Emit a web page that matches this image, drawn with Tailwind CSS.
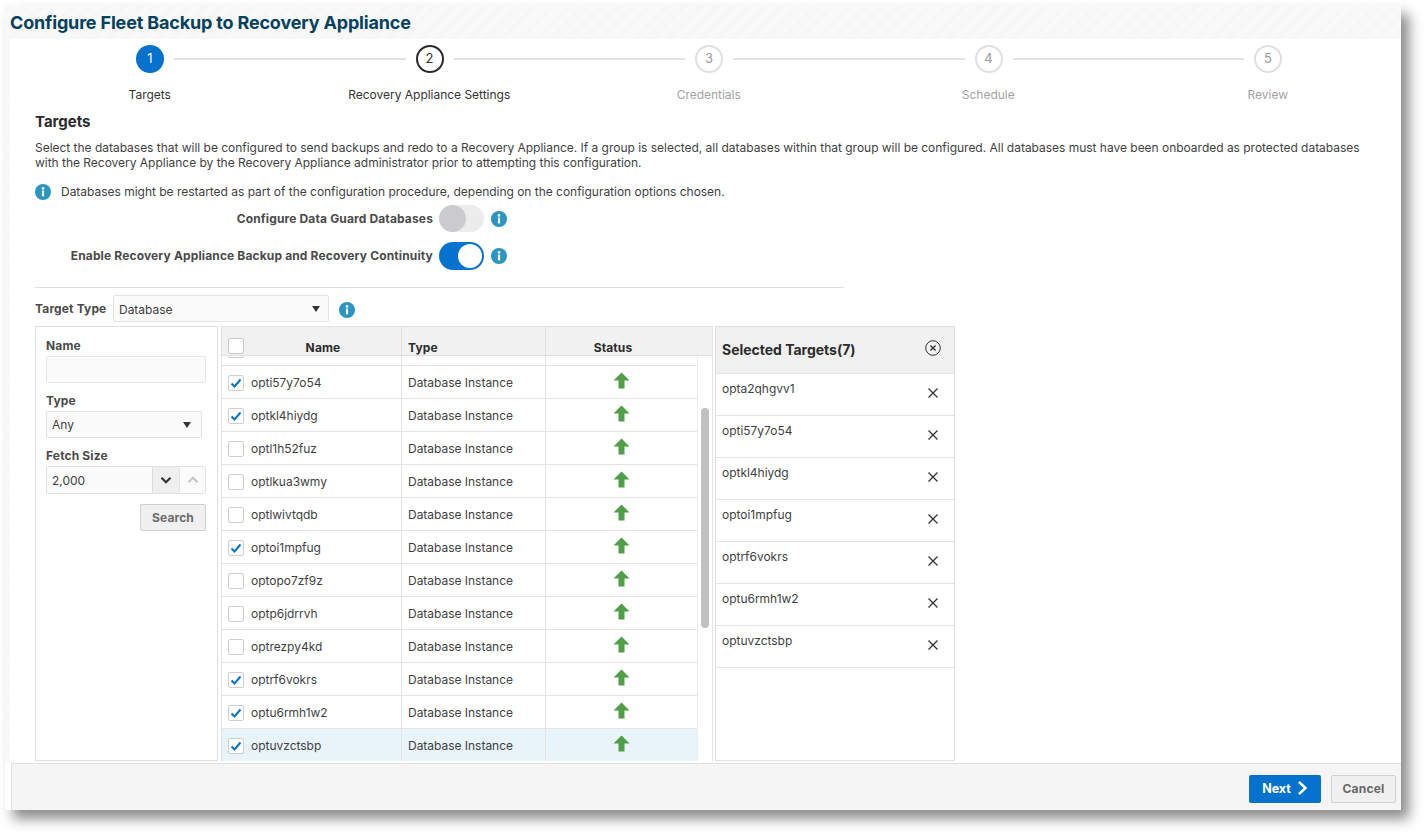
<!DOCTYPE html>
<html lang="en">
<head>
<meta charset="UTF-8">
<title>Configure Fleet Backup to Recovery Appliance</title>
<script src="https://cdn.jsdelivr.net/npm/@tailwindcss/browser@4"></script>
</head>
<body class="bg-white font-['Inter','Liberation_Sans',sans-serif] text-[12px] text-[#3f3f3f] tracking-[-0.02px]">
<div class="w-[1426px] h-[835px] pl-[5px] pt-[5px] overflow-hidden">
  <div class="w-[1396px] h-[805px] flex flex-col relative bg-white shadow-[8px_9px_12px_rgba(0,0,0,0.45)]">
    <!-- title bar -->
    <div class="h-[34px] shrink-0 pl-[5px] flex items-center bg-[repeating-linear-gradient(135deg,#f5f5f5_0,#f5f5f5_1px,#fbfbfb_1px,#fbfbfb_2px)]">
      <h1 class="text-[18px] font-bold text-[#04415f] tracking-[-0.17px]">Configure Fleet Backup to Recovery Appliance</h1>
    </div>

    <div class="flex-1 flex min-h-0">
      <div class="w-[5px] shrink-0 bg-[repeating-linear-gradient(135deg,#f5f5f5_0,#f5f5f5_1px,#fbfbfb_1px,#fbfbfb_2px)]"></div>
      <div class="flex-1 min-w-0 flex flex-col">
        <!-- stepper -->
        <div class="pt-[6px] flex items-center pl-[126px] pr-[119px]">
          <div class="w-[28px] h-[28px] rounded-full bg-[#0572ce] text-white flex items-center justify-center text-[13px] shrink-0">1</div>
          <div class="flex-1 h-[2px] bg-[#e3e3e3] mx-[10px]"></div>
          <div class="w-[28px] h-[28px] rounded-full border-2 border-[#2b2b2b] text-[#333] flex items-center justify-center text-[13px] shrink-0">2</div>
          <div class="flex-1 h-[2px] bg-[#e3e3e3] mx-[10px]"></div>
          <div class="w-[28px] h-[28px] rounded-full border-2 border-[#e0e0e0] text-[#9a9a9a] flex items-center justify-center text-[13px] shrink-0">3</div>
          <div class="flex-1 h-[2px] bg-[#e3e3e3] mx-[10px]"></div>
          <div class="w-[28px] h-[28px] rounded-full border-2 border-[#e0e0e0] text-[#9a9a9a] flex items-center justify-center text-[13px] shrink-0">4</div>
          <div class="flex-1 h-[2px] bg-[#e3e3e3] mx-[10px]"></div>
          <div class="w-[28px] h-[28px] rounded-full border-2 border-[#e0e0e0] text-[#9a9a9a] flex items-center justify-center text-[13px] shrink-0">5</div>
        </div>
        <div class="grid grid-cols-[repeat(5,279.5px)] mt-[14px] h-[15px] leading-[15px] text-center">
          <div class="text-[#333]">Targets</div>
          <div class="text-[#333]">Recovery Appliance Settings</div>
          <div class="text-[#a3a3a3]">Credentials</div>
          <div class="text-[#a3a3a3]">Schedule</div>
          <div class="text-[#a3a3a3]">Review</div>
        </div>

        <!-- content -->
        <div class="pl-[25px] pt-[11px] flex-1 min-h-0 flex flex-col">
          <h2 class="text-[15px] font-bold text-[#2b2b2b] leading-[18px]">Targets</h2>
          <p class="mt-[9px] leading-[15px] w-[1340px] text-[#3f3f3f]">Select the databases that will be configured to send backups and redo to a Recovery Appliance. If a group is selected, all databases within that group will be configured. All databases must have been onboarded as protected databases with the Recovery Appliance by the Recovery Appliance administrator prior to attempting this configuration.</p>
          <div class="mt-[14px] flex items-center h-[16px]">
            <svg class="w-[16px] h-[16px] shrink-0" viewBox="0 0 16 16"><circle cx="8" cy="8" r="8" fill="#2b94c3"/><rect x="6.9" y="6.6" width="2.2" height="5.8" fill="#fff"/><circle cx="8" cy="4.4" r="1.3" fill="#fff"/></svg>
            <span class="ml-[10px]">Databases might be restarted as part of the configuration procedure, depending on the configuration options chosen.</span>
          </div>

          <div class="mt-[5px] h-[27px] flex items-center">
            <label class="w-[398px] text-right font-bold tracking-[0.14px] text-[#4a4a4a]">Configure Data Guard Databases</label>
            <div class="ml-[6px] w-[45px] h-[27px] rounded-full bg-[#ececec] relative">
              <div class="absolute left-0 top-0 w-[27px] h-[27px] rounded-full bg-[#cbcbcd]"></div>
            </div>
            <svg class="ml-[7px] w-[16px] h-[16px]" viewBox="0 0 16 16"><circle cx="8" cy="8" r="8" fill="#2b94c3"/><rect x="6.9" y="6.6" width="2.2" height="5.8" fill="#fff"/><circle cx="8" cy="4.4" r="1.3" fill="#fff"/></svg>
          </div>
          <div class="mt-[10px] h-[28px] flex items-center">
            <label class="w-[398px] text-right font-bold tracking-[0.14px] text-[#4a4a4a]">Enable Recovery Appliance Backup and Recovery Continuity</label>
            <div class="ml-[6px] w-[45px] h-[28px] rounded-full bg-[#0572ce] relative">
              <div class="absolute right-[2px] top-[2px] w-[24px] h-[24px] rounded-full bg-white"></div>
            </div>
            <svg class="ml-[7px] w-[16px] h-[16px]" viewBox="0 0 16 16"><circle cx="8" cy="8" r="8" fill="#2b94c3"/><rect x="6.9" y="6.6" width="2.2" height="5.8" fill="#fff"/><circle cx="8" cy="4.4" r="1.3" fill="#fff"/></svg>
          </div>
          <div class="mt-[17px] w-[809px] h-px bg-[#dfdfdf]"></div>

          <div class="mt-[7px] h-[27px] flex items-center">
            <label class="w-[78px] font-bold tracking-[0.14px] text-[#4a4a4a]">Target Type</label>
            <div class="w-[216px] h-[27px] border border-[#e3e3e3] rounded-[2px] bg-[#fbfbfb] flex items-center justify-between pl-[5px] pr-[7px]">
              <span class="pt-[2px]">Database</span>
              <span class="w-0 h-0 border-l-[4.5px] border-r-[4.5px] border-t-[6px] border-l-transparent border-r-transparent border-t-[#333] mr-[1px]"></span>
            </div>
            <svg class="ml-[10px] mt-[3px] w-[16px] h-[16px]" viewBox="0 0 16 16"><circle cx="8" cy="8" r="8" fill="#2b94c3"/><rect x="6.9" y="6.6" width="2.2" height="5.8" fill="#fff"/><circle cx="8" cy="4.4" r="1.3" fill="#fff"/></svg>
          </div>

          <div class="mt-[4px] flex items-start">
            <!-- search panel -->
            <div class="w-[183px] h-[435px] border border-[#dfdfdf] pl-[10px] pr-[11px] pt-[11px] shrink-0">
              <div class="font-bold tracking-[0.14px] text-[#4a4a4a] leading-[15px]">Name</div>
              <div class="mt-[3px] h-[27px] border border-[#e8e8e8] rounded-[2px] bg-[#fbfbfb]"></div>
              <div class="mt-[10px] font-bold tracking-[0.14px] text-[#4a4a4a] leading-[15px]">Type</div>
              <div class="mt-[3px] w-[156px] h-[27px] border border-[#e3e3e3] rounded-[2px] bg-[#fbfbfb] flex items-center justify-between pl-[5px] pr-[10px]">
                <span class="pt-[1px]">Any</span>
                <span class="w-0 h-0 border-l-[4.5px] border-r-[4.5px] border-t-[6px] border-l-transparent border-r-transparent border-t-[#333]"></span>
              </div>
              <div class="mt-[10px] font-bold tracking-[0.14px] text-[#4a4a4a] leading-[15px]">Fetch Size</div>
              <div class="mt-[3px] h-[28px] border border-[#e3e3e3] rounded-[2px] bg-[#fbfbfb] flex">
                <div class="flex-1 pl-[5px] pt-[1px] flex items-center">2,000</div>
                <div class="w-[27px] border-l border-[#dcdcdc] bg-[#efefef] flex items-center justify-center">
                  <svg class="w-[12px] h-[12px]" viewBox="0 0 12 12" fill="none" stroke="#333" stroke-width="2.2"><path d="M1.5 3.8 6 8.2l4.5-4.4"/></svg>
                </div>
                <div class="w-[26px] border-l border-[#e3e3e3] flex items-center justify-center">
                  <svg class="w-[12px] h-[12px]" viewBox="0 0 12 12" fill="none" stroke="#c6c6c6" stroke-width="2.2"><path d="M1.5 8.2 6 3.8l4.5 4.4"/></svg>
                </div>
              </div>
              <div class="mt-[10px] flex justify-end">
                <button class="w-[66px] h-[27px] border border-[#d0d0d0] rounded-[2px] bg-[#f0f0f0] font-bold tracking-[0.1px] text-[#6a6a6a]">Search</button>
              </div>
            </div>

            <!-- table -->
            <div class="ml-[3px] w-[492px] h-[435px] border-l border-t border-r border-[#e3e3e3] shrink-0 flex flex-col">
              <div class="h-[29px] shrink-0 bg-[#f1f1f1] border-b border-[#e0e0e0] flex font-bold tracking-[0.14px] text-[#2b2b2b] leading-[15px]">
                <div class="w-[180px] border-r border-[#e0e0e0] relative flex items-end justify-center pl-[23px]">
                  <span class="absolute left-[6px] top-[11px] w-[16px] h-[16px] border border-[#c8c8c8] rounded-[2px] bg-white"></span>Name</div>
                <div class="w-[144px] border-r border-[#e0e0e0] flex items-end pl-[6px]">Type</div>
                <div class="flex-1 flex items-end justify-center pr-[32px]">Status</div>
              </div>
              <div class="flex-1 min-h-0 flex overflow-hidden">
                <div class="flex-1 min-w-0 overflow-hidden border-r border-[#ededed]" id="rows">
                  <div class="-mt-[23px]">
                    <div class="h-[33px] border-b border-[#e3e3e3] flex items-center">
                      <div class="w-[180px] h-full border-r border-[#e3e3e3] flex items-center pl-[6px] pt-[1px]"><span class="w-[16px] h-[16px] border border-[#cfcfcf] rounded-[2px] bg-white shrink-0"></span></div>
                      <div class="w-[144px] h-full border-r border-[#e3e3e3]"></div>
                    </div>
                    <div class="h-[33px] border-b border-[#e3e3e3] flex">
                      <div class="w-[180px] border-r border-[#e3e3e3] flex items-center pl-[6px] pt-[1px]"><span class="w-[16px] h-[16px] border border-[#cfcfcf] rounded-[2px] bg-white shrink-0 flex items-center justify-center"><svg class="w-[12px] h-[12px]" viewBox="0 0 12 12" fill="none" stroke="#0572ce" stroke-width="2"><path d="M1.5 6.5 4.5 9.5 10.5 2.5"/></svg></span><span class="ml-[7px]">opti57y7o54</span></div>
                      <div class="w-[144px] border-r border-[#e3e3e3] flex items-center pl-[6px] pt-[1px]">Database Instance</div>
                      <div class="flex-1 flex items-center justify-center pr-[1px] pb-[3px]"><svg class="w-[17px] h-[17px]" viewBox="0 0 17 17"><path d="M8.5 0.5 16.5 8.5H11.5V16.5H5.5V8.5H0.5Z" fill="#519e49"/></svg></div>
                    </div>
                    <div class="h-[33px] border-b border-[#e3e3e3] flex">
                      <div class="w-[180px] border-r border-[#e3e3e3] flex items-center pl-[6px] pt-[1px]"><span class="w-[16px] h-[16px] border border-[#cfcfcf] rounded-[2px] bg-white shrink-0 flex items-center justify-center"><svg class="w-[12px] h-[12px]" viewBox="0 0 12 12" fill="none" stroke="#0572ce" stroke-width="2"><path d="M1.5 6.5 4.5 9.5 10.5 2.5"/></svg></span><span class="ml-[7px]">optkl4hiydg</span></div>
                      <div class="w-[144px] border-r border-[#e3e3e3] flex items-center pl-[6px] pt-[1px]">Database Instance</div>
                      <div class="flex-1 flex items-center justify-center pr-[1px] pb-[3px]"><svg class="w-[17px] h-[17px]" viewBox="0 0 17 17"><path d="M8.5 0.5 16.5 8.5H11.5V16.5H5.5V8.5H0.5Z" fill="#519e49"/></svg></div>
                    </div>
                    <div class="h-[33px] border-b border-[#e3e3e3] flex">
                      <div class="w-[180px] border-r border-[#e3e3e3] flex items-center pl-[6px] pt-[1px]"><span class="w-[16px] h-[16px] border border-[#cfcfcf] rounded-[2px] bg-white shrink-0"></span><span class="ml-[7px]">optl1h52fuz</span></div>
                      <div class="w-[144px] border-r border-[#e3e3e3] flex items-center pl-[6px] pt-[1px]">Database Instance</div>
                      <div class="flex-1 flex items-center justify-center pr-[1px] pb-[3px]"><svg class="w-[17px] h-[17px]" viewBox="0 0 17 17"><path d="M8.5 0.5 16.5 8.5H11.5V16.5H5.5V8.5H0.5Z" fill="#519e49"/></svg></div>
                    </div>
                    <div class="h-[33px] border-b border-[#e3e3e3] flex">
                      <div class="w-[180px] border-r border-[#e3e3e3] flex items-center pl-[6px] pt-[1px]"><span class="w-[16px] h-[16px] border border-[#cfcfcf] rounded-[2px] bg-white shrink-0"></span><span class="ml-[7px]">optlkua3wmy</span></div>
                      <div class="w-[144px] border-r border-[#e3e3e3] flex items-center pl-[6px] pt-[1px]">Database Instance</div>
                      <div class="flex-1 flex items-center justify-center pr-[1px] pb-[3px]"><svg class="w-[17px] h-[17px]" viewBox="0 0 17 17"><path d="M8.5 0.5 16.5 8.5H11.5V16.5H5.5V8.5H0.5Z" fill="#519e49"/></svg></div>
                    </div>
                    <div class="h-[33px] border-b border-[#e3e3e3] flex">
                      <div class="w-[180px] border-r border-[#e3e3e3] flex items-center pl-[6px] pt-[1px]"><span class="w-[16px] h-[16px] border border-[#cfcfcf] rounded-[2px] bg-white shrink-0"></span><span class="ml-[7px]">optlwivtqdb</span></div>
                      <div class="w-[144px] border-r border-[#e3e3e3] flex items-center pl-[6px] pt-[1px]">Database Instance</div>
                      <div class="flex-1 flex items-center justify-center pr-[1px] pb-[3px]"><svg class="w-[17px] h-[17px]" viewBox="0 0 17 17"><path d="M8.5 0.5 16.5 8.5H11.5V16.5H5.5V8.5H0.5Z" fill="#519e49"/></svg></div>
                    </div>
                    <div class="h-[33px] border-b border-[#e3e3e3] flex">
                      <div class="w-[180px] border-r border-[#e3e3e3] flex items-center pl-[6px] pt-[1px]"><span class="w-[16px] h-[16px] border border-[#cfcfcf] rounded-[2px] bg-white shrink-0 flex items-center justify-center"><svg class="w-[12px] h-[12px]" viewBox="0 0 12 12" fill="none" stroke="#0572ce" stroke-width="2"><path d="M1.5 6.5 4.5 9.5 10.5 2.5"/></svg></span><span class="ml-[7px]">optoi1mpfug</span></div>
                      <div class="w-[144px] border-r border-[#e3e3e3] flex items-center pl-[6px] pt-[1px]">Database Instance</div>
                      <div class="flex-1 flex items-center justify-center pr-[1px] pb-[3px]"><svg class="w-[17px] h-[17px]" viewBox="0 0 17 17"><path d="M8.5 0.5 16.5 8.5H11.5V16.5H5.5V8.5H0.5Z" fill="#519e49"/></svg></div>
                    </div>
                    <div class="h-[33px] border-b border-[#e3e3e3] flex">
                      <div class="w-[180px] border-r border-[#e3e3e3] flex items-center pl-[6px] pt-[1px]"><span class="w-[16px] h-[16px] border border-[#cfcfcf] rounded-[2px] bg-white shrink-0"></span><span class="ml-[7px]">optopo7zf9z</span></div>
                      <div class="w-[144px] border-r border-[#e3e3e3] flex items-center pl-[6px] pt-[1px]">Database Instance</div>
                      <div class="flex-1 flex items-center justify-center pr-[1px] pb-[3px]"><svg class="w-[17px] h-[17px]" viewBox="0 0 17 17"><path d="M8.5 0.5 16.5 8.5H11.5V16.5H5.5V8.5H0.5Z" fill="#519e49"/></svg></div>
                    </div>
                    <div class="h-[33px] border-b border-[#e3e3e3] flex">
                      <div class="w-[180px] border-r border-[#e3e3e3] flex items-center pl-[6px] pt-[1px]"><span class="w-[16px] h-[16px] border border-[#cfcfcf] rounded-[2px] bg-white shrink-0"></span><span class="ml-[7px]">optp6jdrrvh</span></div>
                      <div class="w-[144px] border-r border-[#e3e3e3] flex items-center pl-[6px] pt-[1px]">Database Instance</div>
                      <div class="flex-1 flex items-center justify-center pr-[1px] pb-[3px]"><svg class="w-[17px] h-[17px]" viewBox="0 0 17 17"><path d="M8.5 0.5 16.5 8.5H11.5V16.5H5.5V8.5H0.5Z" fill="#519e49"/></svg></div>
                    </div>
                    <div class="h-[33px] border-b border-[#e3e3e3] flex">
                      <div class="w-[180px] border-r border-[#e3e3e3] flex items-center pl-[6px] pt-[1px]"><span class="w-[16px] h-[16px] border border-[#cfcfcf] rounded-[2px] bg-white shrink-0"></span><span class="ml-[7px]">optrezpy4kd</span></div>
                      <div class="w-[144px] border-r border-[#e3e3e3] flex items-center pl-[6px] pt-[1px]">Database Instance</div>
                      <div class="flex-1 flex items-center justify-center pr-[1px] pb-[3px]"><svg class="w-[17px] h-[17px]" viewBox="0 0 17 17"><path d="M8.5 0.5 16.5 8.5H11.5V16.5H5.5V8.5H0.5Z" fill="#519e49"/></svg></div>
                    </div>
                    <div class="h-[33px] border-b border-[#e3e3e3] flex">
                      <div class="w-[180px] border-r border-[#e3e3e3] flex items-center pl-[6px] pt-[1px]"><span class="w-[16px] h-[16px] border border-[#cfcfcf] rounded-[2px] bg-white shrink-0 flex items-center justify-center"><svg class="w-[12px] h-[12px]" viewBox="0 0 12 12" fill="none" stroke="#0572ce" stroke-width="2"><path d="M1.5 6.5 4.5 9.5 10.5 2.5"/></svg></span><span class="ml-[7px]">optrf6vokrs</span></div>
                      <div class="w-[144px] border-r border-[#e3e3e3] flex items-center pl-[6px] pt-[1px]">Database Instance</div>
                      <div class="flex-1 flex items-center justify-center pr-[1px] pb-[3px]"><svg class="w-[17px] h-[17px]" viewBox="0 0 17 17"><path d="M8.5 0.5 16.5 8.5H11.5V16.5H5.5V8.5H0.5Z" fill="#519e49"/></svg></div>
                    </div>
                    <div class="h-[33px] border-b border-[#e3e3e3] flex">
                      <div class="w-[180px] border-r border-[#e3e3e3] flex items-center pl-[6px] pt-[1px]"><span class="w-[16px] h-[16px] border border-[#cfcfcf] rounded-[2px] bg-white shrink-0 flex items-center justify-center"><svg class="w-[12px] h-[12px]" viewBox="0 0 12 12" fill="none" stroke="#0572ce" stroke-width="2"><path d="M1.5 6.5 4.5 9.5 10.5 2.5"/></svg></span><span class="ml-[7px]">optu6rmh1w2</span></div>
                      <div class="w-[144px] border-r border-[#e3e3e3] flex items-center pl-[6px] pt-[1px]">Database Instance</div>
                      <div class="flex-1 flex items-center justify-center pr-[1px] pb-[3px]"><svg class="w-[17px] h-[17px]" viewBox="0 0 17 17"><path d="M8.5 0.5 16.5 8.5H11.5V16.5H5.5V8.5H0.5Z" fill="#519e49"/></svg></div>
                    </div>
                    <div class="h-[33px] bg-[#e8f3fa] flex">
                      <div class="w-[180px] border-r border-[#e3e3e3] flex items-center pl-[6px]"><span class="w-[16px] h-[16px] border border-[#cfcfcf] rounded-[2px] bg-white shrink-0 flex items-center justify-center"><svg class="w-[12px] h-[12px]" viewBox="0 0 12 12" fill="none" stroke="#0572ce" stroke-width="2"><path d="M1.5 6.5 4.5 9.5 10.5 2.5"/></svg></span><span class="ml-[7px]">optuvzctsbp</span></div>
                      <div class="w-[144px] border-r border-[#e3e3e3] flex items-center pl-[6px]">Database Instance</div>
                      <div class="flex-1 flex items-center justify-center pr-[1px] pb-[4px]"><svg class="w-[17px] h-[17px]" viewBox="0 0 17 17"><path d="M8.5 0.5 16.5 8.5H11.5V16.5H5.5V8.5H0.5Z" fill="#519e49"/></svg></div>
                    </div>
                  </div>
                </div>
                <!-- scrollbar -->
                <div class="w-[14px] shrink-0 pl-[3px] pt-[52px]">
                  <div class="w-[8px] h-[220px] rounded-full bg-[#c1c1c1]"></div>
                </div>
              </div>
            </div>

            <!-- selected targets -->
            <div class="ml-[2px] w-[240px] h-[435px] border border-[#e0e0e0] shrink-0">
              <div class="h-[47px] bg-[#f1f1f1] border-b border-[#e3e3e3] flex items-center justify-between pl-[6px] pr-[13px]">
                <span class="text-[14px] font-bold text-[#2b2b2b] -mt-[2px]">Selected Targets(7)</span>
                <svg class="w-[16px] h-[16px] -mt-[4px]" viewBox="0 0 16 16" fill="none" stroke="#333" stroke-width="1"><circle cx="8" cy="8" r="7.3"/><path d="M5.4 5.4l5.2 5.2M10.6 5.4l-5.2 5.2" stroke-width="1.4"/></svg>
              </div>
              <div class="h-[42px] border-b border-[#e3e3e3] flex justify-between pl-[6px] pr-[16px] pt-[7px]"><span class="leading-[15px]">opta2qhgvv1</span><svg class="w-[10px] h-[10px] mt-[7px]" viewBox="0 0 10 10" stroke="#333" stroke-width="1.3"><path d="M0.5 0.5l9 9M9.5 0.5l-9 9"/></svg></div>
              <div class="h-[42px] border-b border-[#e3e3e3] flex justify-between pl-[6px] pr-[16px] pt-[7px]"><span class="leading-[15px]">opti57y7o54</span><svg class="w-[10px] h-[10px] mt-[7px]" viewBox="0 0 10 10" stroke="#333" stroke-width="1.3"><path d="M0.5 0.5l9 9M9.5 0.5l-9 9"/></svg></div>
              <div class="h-[42px] border-b border-[#e3e3e3] flex justify-between pl-[6px] pr-[16px] pt-[7px]"><span class="leading-[15px]">optkl4hiydg</span><svg class="w-[10px] h-[10px] mt-[7px]" viewBox="0 0 10 10" stroke="#333" stroke-width="1.3"><path d="M0.5 0.5l9 9M9.5 0.5l-9 9"/></svg></div>
              <div class="h-[42px] border-b border-[#e3e3e3] flex justify-between pl-[6px] pr-[16px] pt-[7px]"><span class="leading-[15px]">optoi1mpfug</span><svg class="w-[10px] h-[10px] mt-[7px]" viewBox="0 0 10 10" stroke="#333" stroke-width="1.3"><path d="M0.5 0.5l9 9M9.5 0.5l-9 9"/></svg></div>
              <div class="h-[42px] border-b border-[#e3e3e3] flex justify-between pl-[6px] pr-[16px] pt-[7px]"><span class="leading-[15px]">optrf6vokrs</span><svg class="w-[10px] h-[10px] mt-[7px]" viewBox="0 0 10 10" stroke="#333" stroke-width="1.3"><path d="M0.5 0.5l9 9M9.5 0.5l-9 9"/></svg></div>
              <div class="h-[42px] border-b border-[#e3e3e3] flex justify-between pl-[6px] pr-[16px] pt-[7px]"><span class="leading-[15px]">optu6rmh1w2</span><svg class="w-[10px] h-[10px] mt-[7px]" viewBox="0 0 10 10" stroke="#333" stroke-width="1.3"><path d="M0.5 0.5l9 9M9.5 0.5l-9 9"/></svg></div>
              <div class="h-[42px] border-b border-[#e3e3e3] flex justify-between pl-[6px] pr-[16px] pt-[7px]"><span class="leading-[15px]">optuvzctsbp</span><svg class="w-[10px] h-[10px] mt-[7px]" viewBox="0 0 10 10" stroke="#333" stroke-width="1.3"><path d="M0.5 0.5l9 9M9.5 0.5l-9 9"/></svg></div>
            </div>
          </div>
        </div>
      </div>
    </div>

    <!-- footer -->
    <div class="h-[47px] shrink-0 ml-[6px] border-t border-l border-[#e0e0e0] bg-[#f5f5f5] flex items-center justify-end pr-[5px] pt-[3px] gap-[10px]">
      <button class="w-[72px] h-[28px] rounded-[2px] bg-[#0572ce] text-white font-bold flex items-center justify-center gap-[6px] text-[12.5px] pt-[1px]">Next<svg class="w-[11px] h-[14px] -mt-[2px]" viewBox="0 0 11 14" fill="none" stroke="#fff" stroke-width="2.4"><path d="M2 1l6.5 6L2 13"/></svg></button>
      <button class="w-[65px] h-[28px] rounded-[2px] border border-[#d0d0d0] bg-[#f0f0f0] font-bold text-[#666] tracking-[0.2px]">Cancel</button>
    </div>
  </div>
</div>
</body>
</html>
